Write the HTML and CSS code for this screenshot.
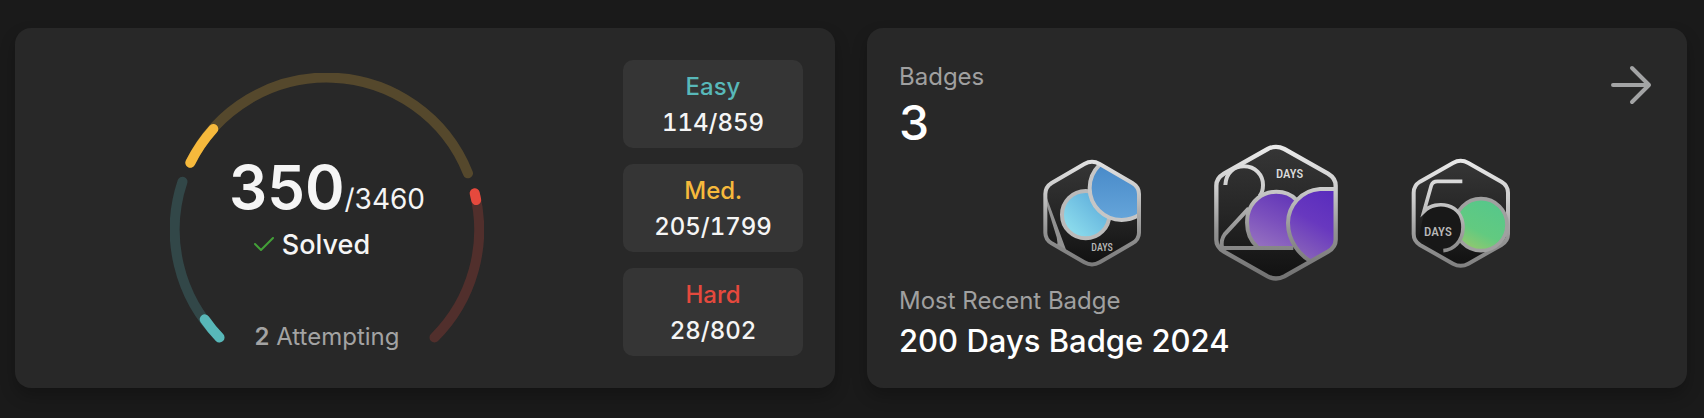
FILE: index.html
```html
<!DOCTYPE html>
<html lang="en">
<head>
<meta charset="utf-8">
<title>Progress</title>
<link rel="stylesheet" href="styles.css">
</head>
<body>
<main class="dashboard">
  <section class="card progress">
    <div class="gauge">
      <svg class="ring" viewBox="0 0 314 270" aria-hidden="true">
        <path class="easy track" d="M49.5 264.5A152 152 0 0 1 12.5 108.7"/>
        <path class="medium track" d="M20.3 89.7A152 152 0 0 1 298 100.3"/>
        <path class="hard track" d="M304.7 120.3A152 152 0 0 1 264.5 264.5"/>
        <path class="easy" d="M49.5 264.5A152 152 0 0 1 34.7 246.3"/>
        <path class="medium" d="M20.3 89.7A152 152 0 0 1 43.3 56"/>
        <path class="hard" d="M304.7 120.3A152 152 0 0 1 306.2 127"/>
      </svg>
      <div class="summary">
        <div class="solved"><span class="count">350</span><span class="total">/3460</span></div>
        <div class="status">
          <svg class="check" viewBox="0 0 24 20" aria-hidden="true"><path d="M3 9l6 6L21 3"/></svg>
          <span>Solved</span>
        </div>
      </div>
      <div class="attempting"><b>2</b> Attempting</div>
    </div>
    <div class="levels">
      <div class="level"><span class="easy-text">Easy</span><span>114/859</span></div>
      <div class="level"><span class="medium-text">Med.</span><span>205/1799</span></div>
      <div class="level"><span class="hard-text">Hard</span><span>28/802</span></div>
    </div>
  </section>

  <section class="card badges">
    <header class="badges-head">
      <div>
        <h2 class="label">Badges</h2>
        <div class="badge-count">3</div>
      </div>
      <a class="more" href="#" aria-label="All badges">
        <svg viewBox="0 0 48 48" aria-hidden="true"><path d="M6 24H42M25 7L42 24L25 41"/></svg>
      </a>
    </header>

    <div class="badge-row">
      <svg class="badge-small" viewBox="72 81 294 324" role="img" aria-label="100 Days Badge">
        <defs>
          <linearGradient id="steel" gradientUnits="userSpaceOnUse" x1="0" y1="60" x2="0" y2="430"><stop offset="0" stop-color="#e8e8e8"/><stop offset=".3" stop-color="#cccccc"/><stop offset=".65" stop-color="#929292"/><stop offset="1" stop-color="#747474"/></linearGradient>
          <linearGradient id="plate" x1="0" y1="0" x2="0" y2="1"><stop offset="0" stop-color="#363636"/><stop offset=".5" stop-color="#262626"/><stop offset="1" stop-color="#111111"/></linearGradient>
          <linearGradient id="aqua" x1="0" y1="1" x2="1" y2="0"><stop offset="0" stop-color="#96e6f0"/><stop offset="1" stop-color="#55a4d8"/></linearGradient>
          <linearGradient id="blue" x1="0" y1="0" x2="0" y2="1"><stop offset="0" stop-color="#4486c6"/><stop offset="1" stop-color="#65a5da"/></linearGradient>
          <clipPath id="hexA"><path d="M196 96Q219 83 242 96L340 153Q360 165 360 186V302Q360 322 340 334L242 391Q219 404 196 391L98 334Q79 322 79 302V186Q79 165 98 153Z"/></clipPath>
        </defs>
        <path fill="url(#plate)" d="M196 96Q219 83 242 96L340 153Q360 165 360 186V302Q360 322 340 334L242 391Q219 404 196 391L98 334Q79 322 79 302V186Q79 165 98 153Z"/>
        <g clip-path="url(#hexA)">
          <path d="M80 186L88 210L145 364L112 348Q118 332 113 316L84 222Z" fill="#929292"/>
          <circle cx="200" cy="248" r="71" fill="url(#aqua)" stroke="#bababa" stroke-width="12"/>
          <circle cx="308" cy="168" r="96" fill="url(#blue)" stroke="#c6c6c6" stroke-width="12"/>
        </g>
        <path fill="none" stroke="url(#steel)" stroke-width="12" d="M196 96Q219 83 242 96L340 153Q360 165 360 186V302Q360 322 340 334L242 391Q219 404 196 391L98 334Q79 322 79 302V186Q79 165 98 153Z"/>
        <text class="plate-text" x="217" y="358" font-size="30">DAYS</text>
      </svg>

      <svg class="badge-large" viewBox="57 39 378 414" role="img" aria-label="200 Days Badge 2024">
        <defs>
          <linearGradient id="violet" x1=".7" y1="0" x2=".3" y2="1"><stop offset="0" stop-color="#5a2dbd"/><stop offset=".45" stop-color="#6838bf"/><stop offset="1" stop-color="#8b66b9"/></linearGradient>
          <linearGradient id="lilac" x1=".7" y1="0" x2=".3" y2="1"><stop offset="0" stop-color="#6337b8"/><stop offset=".5" stop-color="#7b50bd"/><stop offset="1" stop-color="#946fc0"/></linearGradient>
          <clipPath id="hexB"><path d="M221 54Q246 41 271 54L402 128Q425 142 425 164V326Q425 348 402 362L271 436Q246 449 221 436L90 362Q67 348 67 326V164Q67 142 90 128Z"/></clipPath>
        </defs>
        <path fill="url(#plate)" d="M221 54Q246 41 271 54L402 128Q425 142 425 164V326Q425 348 402 362L271 436Q246 449 221 436L90 362Q67 348 67 326V164Q67 142 90 128Z"/>
        <g clip-path="url(#hexB)" fill="none" stroke="url(#steel)" stroke-width="12">
          <path fill="url(#lilac)" stroke="none" d="M190 348C160 322 156 286 161 252C170 210 205 182 247 182Q285 182 306 206L298 348Z"/>
          <path d="M190 348C160 322 156 286 161 252C170 210 205 182 247 182Q285 182 306 206"/>
          <path d="M94 162C96 124 120 106 150 106C184 106 207 132 207 162Q207 184 196 196M164 232L92 310Q80 326 84 350"/>
          <path d="M76 351H298"/>
          <path fill="url(#violet)" d="M436 174H378C320 178 282 226 282 276C282 330 318 374 352 392L436 346Z"/>
        </g>
        <path fill="none" stroke="url(#steel)" stroke-width="13" d="M221 54Q246 41 271 54L402 128Q425 142 425 164V326Q425 348 402 362L271 436Q246 449 221 436L90 362Q67 348 67 326V164Q67 142 90 128Z"/>
        <text class="plate-text light" x="246" y="140" font-size="38">DAYS</text>
      </svg>

      <svg class="badge-mid" viewBox="51 48 300 330" role="img" aria-label="50 Days Badge">
        <defs>
          <linearGradient id="green" x1=".2" y1="1" x2=".7" y2="0"><stop offset="0" stop-color="#9bc86b"/><stop offset=".4" stop-color="#62ca80"/><stop offset="1" stop-color="#56c78b"/></linearGradient>
        </defs>
        <path fill="url(#plate)" d="M177 63Q200 50 223 63L322 119Q342 131 342 152V276Q342 297 322 309L223 365Q200 378 177 365L78 309Q59 297 59 276V152Q59 131 78 119Z"/>
        <path fill="none" stroke="url(#steel)" stroke-width="12" d="M177 63Q200 50 223 63L322 119Q342 131 342 152V276Q342 297 322 309L223 365Q200 378 177 365L78 309Q59 297 59 276V152Q59 131 78 119Z"/>
        <circle cx="261" cy="248" r="78" fill="url(#green)" stroke="#a0a0a0" stroke-width="11"/>
        <path fill="#181818" d="M90 214C126 172 207 184 207 256C207 300 176 324 148 326L74 290Z"/>
        <path fill="none" stroke="url(#steel)" stroke-width="11" d="M205 118H130Q116 118 112 130L90 208C126 172 207 184 207 256C207 300 176 324 148 326"/>
        <text class="plate-text" x="90" y="281" font-size="39">DAYS</text>
      </svg>
    </div>

    <div>
      <h3 class="label">Most Recent Badge</h3>
      <div class="recent">200 Days Badge 2024</div>
    </div>
  </section>
</main>
</body>
</html>
```
FILE: styles.css
```css
* { box-sizing: border-box; }
body {
  margin: 0;
  background: #1a1a1a;
  color: #f5f5f5;
  font-family: Inter, "Liberation Sans", sans-serif;
  font-size: 24px;
  line-height: 32px;
}
.dashboard {
  display: grid;
  grid-template-columns: 1fr 1fr;
  gap: 32px;
  padding: 28px 17px 30px 15px;
}
.card {
  padding: 32px;
  border-radius: 16px;
  background: #282828;
  box-shadow: 0 8px 16px rgba(0, 0, 0, 0.24);
}
.progress { display: flex; gap: 16px; }
.gauge {
  flex: 1;
  display: grid;
  justify-items: center;
}
.gauge > * { grid-area: 1 / 1; }
.ring { width: 314px; align-self: center; }
.ring path { fill: none; stroke-width: 10; stroke-linecap: round; }
.easy { stroke: #58b8b9; }
.medium { stroke: #f6b93c; }
.hard { stroke: #e5493d; }
.track { stroke-opacity: 0.22; }
.summary {
  display: flex;
  flex-direction: column;
  align-items: center;
  padding-top: 95px;
  font-size: 28px;
}
.solved { line-height: 64px; }
.count { font-size: 60px; font-weight: 600; }
.status {
  display: flex;
  align-items: center;
  gap: 6px;
  padding-right: 32px;
  font-size: 27px;
  font-weight: 500;
  line-height: 28px;
}
.check { width: 24px; }
.check path {
  fill: none;
  stroke: #43a038;
  stroke-width: 2;
  stroke-linecap: round;
  stroke-linejoin: round;
}
.attempting { align-self: end; margin-bottom: 3px; color: #a3a3a3; }
.attempting b { font-weight: 600; }
.levels {
  display: grid;
  grid-auto-rows: 1fr;
  gap: 16px;
  width: 180px;
}
.level {
  display: flex;
  flex-direction: column;
  align-items: center;
  gap: 4px;
  padding: 11px 10px 9px;
  border-radius: 10px;
  background: #353535;
  font-weight: 500;
  font-variant-numeric: tabular-nums;
}
.easy-text { color: #58b8b9; }
.medium-text { color: #f6b93c; }
.hard-text { color: #e5493d; }
.badges {
  display: flex;
  flex-direction: column;
  justify-content: space-between;
  padding: 33px 32px 31px;
}
.badges-head { display: flex; justify-content: space-between; align-items: flex-start; }
.label { margin: 0; color: #a0a0a0; font-size: 24px; font-weight: 400; }
.badge-count {
  margin-top: 10px;
  color: #fff;
  font-size: 48px;
  font-weight: 500;
  line-height: 40px;
}
.more { display: block; width: 48px; height: 48px; }
.more path {
  fill: none;
  stroke: #a3a4a5;
  stroke-width: 4;
  stroke-linecap: round;
  stroke-linejoin: round;
}
.badge-row { display: flex; justify-content: center; align-items: center; gap: 72px; margin-bottom: 2px; }
.badge-small { width: 98px; }
.badge-large { width: 126px; }
.badge-mid { width: 100px; }
.plate-text { fill: #b8b8b8; font-family: "Liberation Sans Narrow", "Roboto Condensed", "Open Sans Condensed", Roboto, sans-serif; font-weight: 500; }
.plate-text.light { fill: #dcdcdc; }
.recent { margin-top: 8px; color: #fff; font-size: 31px; font-weight: 500; }
```
